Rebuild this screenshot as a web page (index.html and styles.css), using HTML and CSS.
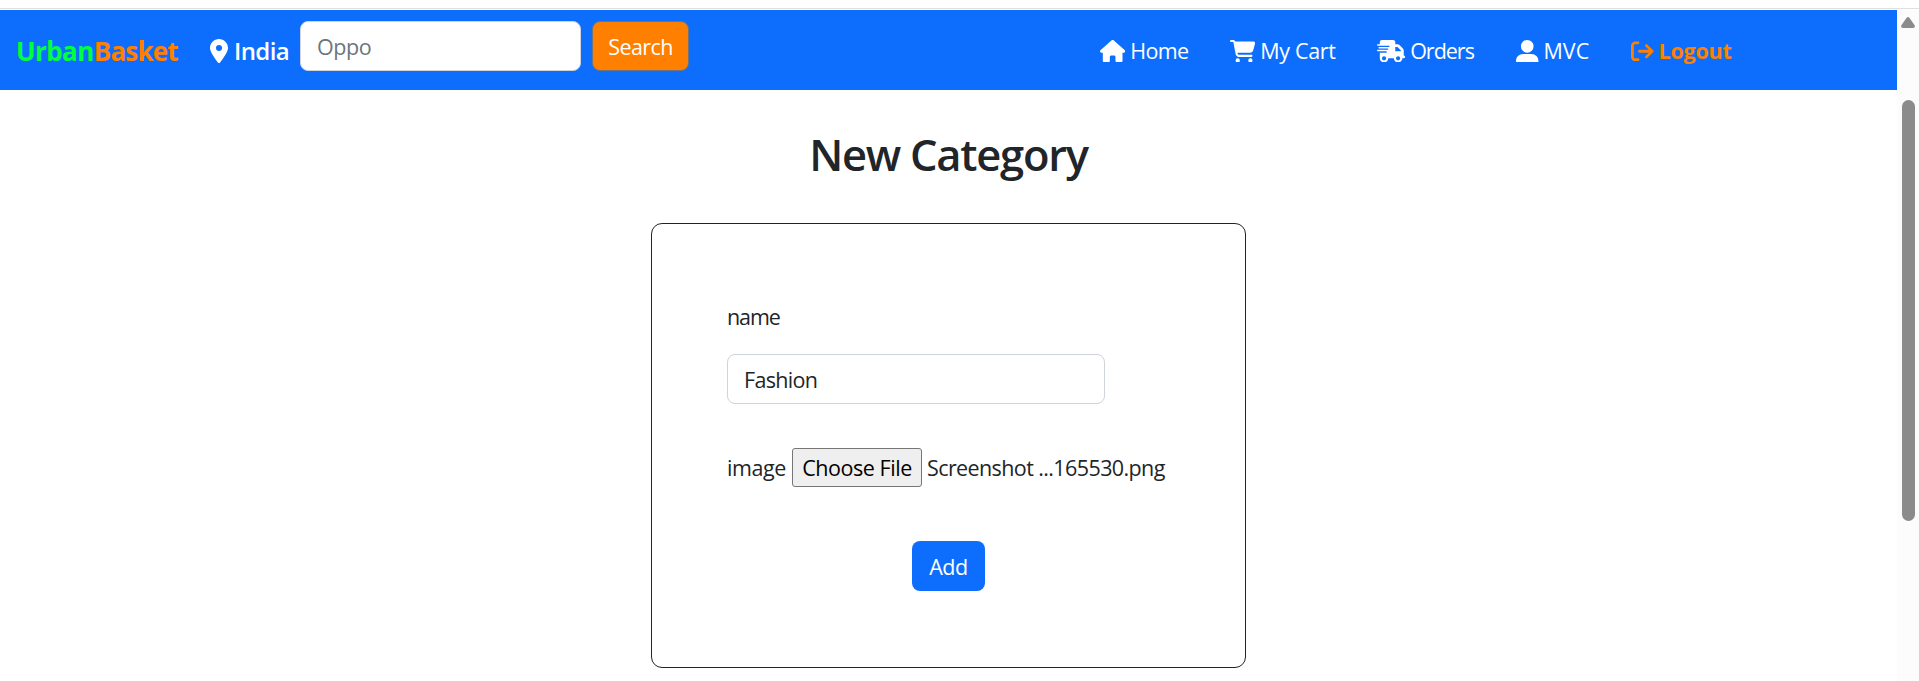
FILE: index.html
```
<!DOCTYPE html>
<html lang="en">
<head>
<meta charset="utf-8">
<title>UrbanBasket</title>
<link rel="stylesheet" href="styles.css">
</head>
<body>
<div class="topline"></div>
<div class="viewport">
  <div class="page">
    <nav class="navbar">
      <a class="brand"><span class="brand-urban">Urban</span><span class="brand-basket">Basket</span></a>
      <div class="place">
        <svg class="pin" viewBox="0 0 384 512"><path d="M215.7 499.2C267 435 384 279.4 384 192C384 86 298 0 192 0S0 86 0 192c0 87.4 117 243 168.3 307.2c12.3 15.3 35.1 15.3 47.4 0zM192 128a64 64 0 1 1 0 128 64 64 0 1 1 0-128z"/></svg>
        <span>India</span>
      </div>
      <form class="search">
        <input class="field search-field" type="text" placeholder="Oppo">
        <button class="btn btn-search" type="button">Search</button>
      </form>
      <div class="links">
        <a class="link home"><svg viewBox="0 0 576 512"><path d="M575.8 255.5c0 18-15 32.1-32 32.1h-32l.7 160.2c0 2.7-.2 5.4-.5 8.1V472c0 22.1-17.9 40-40 40H456c-1.1 0-2.2 0-3.3-.1c-1.4 .1-2.8 .1-4.2 .1H416 392c-22.1 0-40-17.9-40-40V448 384c0-17.7-14.3-32-32-32H256c-17.7 0-32 14.3-32 32v64 24c0 22.1-17.9 40-40 40H160 128.1c-1.5 0-3-.1-4.5-.2c-1.2 .1-2.4 .2-3.6 .2H104c-22.1 0-40-17.9-40-40V360c0-.9 0-1.9 .1-2.8V287.6H32c-18 0-32-14-32-32.1c0-9 3-17 10-24L266.4 8c7-7 15-8 22-8s15 2 21 7L564.8 231.5c8 7 12 15 11 24z"/></svg><span>Home</span></a>
        <a class="link cart"><svg viewBox="0 0 576 512"><path d="M0 24C0 10.7 10.7 0 24 0H69.5c22 0 41.5 12.8 50.6 32h411c26.3 0 45.5 25 38.6 50.4l-41 152.3c-8.5 31.4-37 53.3-69.5 53.3H170.7l5.4 28.5c2.2 11.3 12.1 19.5 23.6 19.5H488c13.3 0 24 10.7 24 24s-10.7 24-24 24H199.7c-34.6 0-64.3-24.6-70.7-58.5L77.4 54.5c-.7-3.8-4-6.5-7.9-6.5H24C10.7 48 0 37.3 0 24zM128 464a48 48 0 1 1 96 0 48 48 0 1 1 -96 0zm336-48a48 48 0 1 1 0 96 48 48 0 1 1 0-96z"/></svg><span>My Cart</span></a>
        <a class="link orders"><svg viewBox="0 0 640 512"><path d="M112 0C85.5 0 64 21.5 64 48V96H16c-8.8 0-16 7.2-16 16s7.2 16 16 16H64 272c8.8 0 16 7.2 16 16s-7.2 16-16 16H64 48c-8.8 0-16 7.2-16 16s7.2 16 16 16H64 240c8.8 0 16 7.2 16 16s-7.2 16-16 16H64 16c-8.8 0-16 7.2-16 16s7.2 16 16 16H64 208c8.8 0 16 7.2 16 16s-7.2 16-16 16H64V416c0 53 43 96 96 96s96-43 96-96H384c0 53 43 96 96 96s96-43 96-96h32c17.7 0 32-14.3 32-32s-14.3-32-32-32V288 256 237.3c0-17-6.7-33.3-18.7-45.3L512 114.7c-12-12-28.3-18.7-45.3-18.7H416V48c0-26.5-21.5-48-48-48H112zM544 237.3V256H416V160h50.7L544 237.3zM160 368a48 48 0 1 1 0 96 48 48 0 1 1 0-96zm272 48a48 48 0 1 1 96 0 48 48 0 1 1 -96 0z"/></svg><span>Orders</span></a>
        <a class="link user"><svg viewBox="0 0 512 512"><path d="M256 288A144 144 0 1 0 256 0a144 144 0 1 0 0 288zm-94.7 32C72.2 320 0 392.2 0 481.3c0 17 13.8 30.7 30.7 30.7H481.3c17 0 30.7-13.8 30.7-30.7C512 392.2 439.8 320 350.7 320H161.3z"/></svg><span>MVC</span></a>
        <a class="link logout"><svg viewBox="0 0 512 512"><path d="M502.6 278.6c12.5-12.5 12.5-32.8 0-45.3l-128-128c-12.5-12.5-32.8-12.5-45.3 0s-12.5 32.8 0 45.3L402.7 224 192 224c-17.7 0-32 14.3-32 32s14.3 32 32 32l210.7 0-73.4 73.4c-12.5 12.5-12.5 32.8 0 45.3s32.8 12.5 45.3 0l128-128zM160 96c17.7 0 32-14.3 32-32s-14.3-32-32-32L96 32C43 32 0 75 0 128L0 384c0 53 43 96 96 96l64 0c17.7 0 32-14.3 32-32s-14.3-32-32-32l-64 0c-17.7 0-32-14.3-32-32l0-256c0-17.7 14.3-32 32-32l64 0z"/></svg><span>Logout</span></a>
      </div>
    </nav>
    <main class="content">
      <h1 class="title">New Category</h1>
      <form class="card">
        <label class="name-label" for="name">name</label>
        <input class="field name-field" id="name" type="text" value="Fashion">
        <div class="file-row">
          <span class="file-label">image</span>
          <button class="file-btn" type="button">Choose File</button>
          <span class="file-name">Screenshot ...165530.png</span>
        </div>
        <button class="btn btn-add" type="button">Add</button>
      </form>
    </main>
  </div>
  <div class="scrollbar">
    <svg class="scroll-up" viewBox="0 0 14 11"><path d="M5.6 .8Q7-.7 8.4 .8L13.6 8.2Q14.6 11 12 11H2Q-.6 11 .4 8.2Z"/></svg>
    <div class="thumb"></div>
  </div>
</div>
</body>
</html>
```

FILE: styles.css
```
* { box-sizing: border-box; }

body {
  margin: 0;
  height: 681px;
  overflow: hidden;
  background: #fff;
  color: #212529;
  font-family: "Open Sans", "Noto Sans", sans-serif;
  font-size: 21.5px;
  line-height: 32px;
}

.topline { height: 10px; border-bottom: 1px solid #fff; box-shadow: inset 0 -1px #dee0e2; }
.viewport { display: flex; height: 671px; }
.page { width: 1897px; }

.navbar {
  display: flex;
  align-items: center;
  height: 80px;
  padding: 2px 0 0 16px;
  background: #0d6efd;
  color: #fff;
}
svg { display: block; fill: currentColor; flex: none; }

.brand { width: 194px; font-size: 26px; font-weight: 700; white-space: nowrap; }
.brand-urban { color: #00ff3c; letter-spacing: -0.6px; }
.brand-basket { color: #ff8000; letter-spacing: -0.8px; }

.place { display: flex; align-items: center; width: 90px; font-size: 24px; font-weight: 600; letter-spacing: -0.6px; }
.pin { width: 18px; height: 24px; margin-right: 6px; }

.search { display: flex; align-self: flex-start; gap: 11px; margin-top: 9px; }
.field {
  height: 50px;
  padding: 1px 16px 0;
  border: 1px solid #ced4da;
  border-radius: 8px;
  background: #fff;
  color: #212529;
  font: inherit;
  letter-spacing: -0.7px;
}
.field::placeholder { color: #6c757d; opacity: 1; letter-spacing: -0.4px; }
.search-field { width: 281px; }

.btn {
  height: 50px;
  padding: 1px 0 0;
  border: 1px solid transparent;
  border-radius: 8px;
  color: #fff;
  font: inherit;
  text-align: center;
  letter-spacing: -0.6px;
}
.btn-search { width: 97px; background: #ff8000; border-color: #6c757d; }

.links {
  display: grid;
  grid-template-columns: 130px 147px 139px 115px 110px;
  margin-left: 411px;
}
.link { display: flex; align-items: center; white-space: nowrap; }
.link svg { height: 22.5px; margin-right: 5px; }
.home { letter-spacing: -0.7px; }
.cart { letter-spacing: -0.35px; }
.orders { letter-spacing: -1px; }
.user { letter-spacing: 0; }
.logout { color: #ff8000; font-weight: 700; letter-spacing: -0.2px; }

.content { display: flex; flex-direction: column; align-items: center; }
.title {
  margin: 35px 0 38px;
  font-size: 43.5px;
  font-weight: 600;
  line-height: 60px;
  letter-spacing: -1.25px;
}
.card {
  display: flex;
  flex-direction: column;
  align-items: flex-start;
  width: 595px;
  height: 445px;
  padding: 77px 75px 0;
  border: 1px solid #212529;
  border-radius: 11px;
}
.name-label { margin-bottom: 21px; letter-spacing: -1.1px; }
.name-field { width: 378px; }
.file-row { display: flex; align-items: center; margin-top: 44px; white-space: nowrap; }
.file-label { width: 65px; letter-spacing: -0.4px; }
.file-btn {
  width: 130px;
  height: 39px;
  margin-right: 5px;
  padding: 0;
  border: 1px solid #767676;
  border-radius: 3px;
  background: #efefef;
  color: #000;
  font: inherit;
  letter-spacing: -0.45px;
}
.file-name { letter-spacing: -0.6px; }
.btn-add { align-self: center; width: 73px; margin-top: 54px; background: #0d6efd; letter-spacing: -0.4px; }

.scrollbar { display: flex; flex-direction: column; align-items: center; width: 22px; background: #fcfcfc; }
.scroll-up { width: 14px; height: 11px; margin-top: 7px; color: #8b8b8b; }
.thumb { width: 13px; height: 421px; margin-top: 72px; border-radius: 7px; background: #8b8b8b; }
```
